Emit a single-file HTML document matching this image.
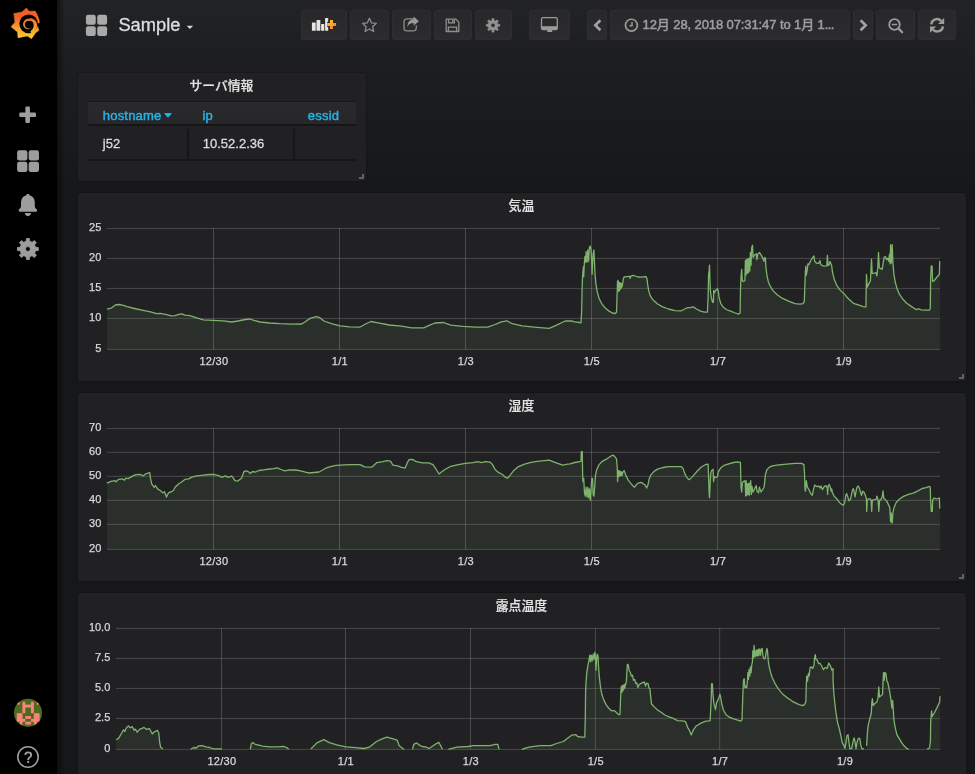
<!DOCTYPE html>
<html lang="ja">
<head>
<meta charset="utf-8">
<title>Grafana - Sample</title>
<style>
*{box-sizing:border-box;margin:0;padding:0}
html,body{width:975px;height:774px;overflow:hidden}
body{background:#161719;color:#d8d9da;font-family:"Liberation Sans","Noto Sans CJK JP",sans-serif;font-size:13px;position:relative}
.page{position:absolute;left:57px;top:0;width:918px;height:774px;background:linear-gradient(180deg,#212325 0,#1c1e20 60px,#161719 200px)}
.page:before{content:"";position:absolute;left:0;top:0;width:8px;height:100%;background:linear-gradient(90deg,rgba(0,0,0,.45),rgba(0,0,0,0))}
.side{position:absolute;left:0;top:0;width:57px;height:774px;background:#000}
.side svg{position:absolute}
.abs{position:absolute}
.btn{position:absolute;top:10px;height:30px;border-radius:2px;background:linear-gradient(180deg,#28282a,#2c2c2e);border:1px solid #2e2e30}
.btn svg{position:absolute}
.title{position:absolute;left:118.4px;top:11.6px;font-size:18.3px;line-height:26px;color:#dcddde;white-space:nowrap;-webkit-text-stroke:0.35px #dcddde}
.time{position:absolute;left:642.6px;top:16.3px;font-size:13px;line-height:18px;color:#9e9fa0;white-space:nowrap;-webkit-text-stroke:0.5px #9e9fa0;letter-spacing:-0.1px}
.panel{position:absolute;background:#212124;border-radius:2.5px;box-shadow:0 0 0 1px rgba(0,0,0,.15)}
.ptitle{position:absolute;left:-1.2px;right:0;text-align:center;font-size:12.8px;font-weight:500;color:#e3e3e3;line-height:18px;white-space:nowrap;-webkit-text-stroke:0.2px #e3e3e3}
.rz{position:absolute;right:2px;bottom:1.7px;width:5.100px;height:5px;border-right:2px solid #626265;border-bottom:2px solid #626265}
.th{position:absolute;color:#25b4e6;font-size:13px;line-height:16px;white-space:nowrap;-webkit-text-stroke:0.45px #25b4e6;letter-spacing:0.2px}
.td{position:absolute;color:#dadbdc;font-size:13px;line-height:16px;white-space:nowrap;-webkit-text-stroke:0.3px #dadbdc}
svg text{font-family:"Liberation Sans","Noto Sans CJK JP",sans-serif}
.ax{font-size:11px;fill:#d8d9da;stroke:#d8d9da;stroke-width:0.25px}
.axx{letter-spacing:0.3px}
body>*{will-change:opacity}
</style>
</head>
<body>
<div class="side"><svg class="abs" style="left:0;top:0" width="57" height="774" viewBox="0 0 57 774">
<defs><linearGradient id="lg" x1="0" y1="0" x2="0" y2="1"><stop offset="0" stop-color="#f05a28"/><stop offset="0.3" stop-color="#f2642b"/><stop offset="0.62" stop-color="#f79a2e"/><stop offset="1" stop-color="#fcd02c"/></linearGradient><clipPath id="av"><circle cx="28" cy="712.9" r="14.1"/></clipPath></defs>
<g id="logo"><polygon points="26.37,8.02 29.16,11.28 35.21,11.05 36.74,13.84 38.14,16.63 39.07,19.65 39.40,22.67 38.23,23.60 37.77,26.86 38.93,30.35 35.44,32.91 31.49,38.72 27.53,35.93 18.00,37.79 17.53,31.98 11.02,26.86 14.98,22.21 13.81,13.60 21.95,11.98" fill="url(#lg)" stroke="url(#lg2)" stroke-width="0.5" stroke-linejoin="round"/>
<circle cx="28.65" cy="23.84" r="9.35" fill="#000"/>
<path d="M35.91 23.37 L40.56 23.23 L40.56 25.47 L35.91 25.93 Z" fill="#000"/>
<polygon points="31.29,33.96 32.08,33.59 32.83,33.15 33.52,32.66 34.17,32.11 34.75,31.52 35.28,30.88 35.65,30.31 35.99,29.73 36.27,29.13 36.50,28.51 36.69,27.89 36.83,27.26 36.94,26.77 37.03,26.28 37.08,25.78 37.11,25.29 37.10,24.79 37.07,24.30 36.81,23.23 36.41,22.24 35.90,21.32 35.28,20.50 34.57,19.80 33.80,19.20 32.93,18.79 32.05,18.50 31.16,18.35 30.30,18.33 29.47,18.42 28.70,18.63 27.96,18.68 27.23,18.82 26.53,19.06 25.86,19.39 25.24,19.80 24.69,20.29 24.21,20.86 23.81,21.48 23.50,22.15 23.28,22.85 23.15,23.57 23.12,24.30 23.21,25.02 23.40,25.72 23.67,26.38 24.03,27.00 24.45,27.56 24.95,28.05 25.52,28.45 26.12,28.76 26.76,28.99 27.41,29.12 28.06,29.18 28.70,29.14 29.05,29.07 29.38,28.98 29.71,28.87 30.02,28.73 30.32,28.57 30.60,28.39 30.55,28.26 30.24,28.36 29.93,28.43 29.62,28.48 29.31,28.51 29.00,28.51 28.70,28.49 28.15,28.44 27.62,28.32 27.11,28.13 26.64,27.87 26.20,27.56 25.80,27.20 25.48,26.78 25.21,26.32 25.00,25.83 24.86,25.33 24.79,24.82 24.79,24.30 24.85,23.80 24.98,23.31 25.17,22.84 25.42,22.41 25.72,22.02 26.07,21.67 26.48,21.41 26.91,21.21 27.36,21.08 27.81,21.01 28.26,21.00 28.70,21.05 29.14,20.91 29.63,20.83 30.14,20.82 30.67,20.89 31.20,21.04 31.72,21.28 32.17,21.64 32.56,22.07 32.91,22.56 33.19,23.10 33.40,23.68 33.53,24.30 33.59,24.59 33.63,24.88 33.64,25.17 33.65,25.48 33.63,25.78 33.59,26.08 33.54,26.48 33.46,26.87 33.35,27.26 33.20,27.65 33.02,28.04 32.81,28.41 32.56,28.90 32.25,29.38 31.90,29.84 31.48,30.27 31.02,30.68 30.50,31.04" fill="url(#lg2)"/>
<linearGradient id="lg2" gradientUnits="userSpaceOnUse" x1="0" y1="8" x2="0" y2="39"><stop offset="0" stop-color="#f05a28"/><stop offset="0.3" stop-color="#f2642b"/><stop offset="0.62" stop-color="#f79a2e"/><stop offset="1" stop-color="#fcd02c"/></linearGradient></g>
<rect x="19.3" y="112.5" width="16.7" height="4.6" rx="1.2" fill="#9d9d9d"/><rect x="25.35" y="106.5" width="4.6" height="16.4" rx="1.2" fill="#9d9d9d"/>
<rect x="17.10" y="150.20" width="10.30" height="10.25" rx="2.20" fill="#9d9d9d"/><rect x="17.10" y="161.75" width="10.30" height="10.25" rx="2.20" fill="#9d9d9d"/><rect x="28.70" y="150.20" width="10.30" height="10.25" rx="2.20" fill="#9d9d9d"/><rect x="28.70" y="161.75" width="10.30" height="10.25" rx="2.20" fill="#9d9d9d"/>
<path d="M27.9 194.1c1 0 1.5 .5 1.6 1.2c3.4 .9 5.3 3.4 5.3 7.3v3.6c0 1.2 .6 2 1.7 2.800c.5 .4 .6 .8 .6 1.300c0 .9 -.6 1.5 -1.6 1.500h-15.200c-1 0 -1.6 -.6 -1.6 -1.500c0 -.5 .1 -.9 .6 -1.300c1.1 -.8 1.7 -1.6 1.7 -2.800v-3.600c0 -3.9 1.9 -6.4 5.3 -7.300c.1 -.7 .6 -1.2 1.6 -1.200z" fill="#9d9d9d"/>
<path d="M24.9 213.1h6c0 1.8 -1.3 3.1 -3 3.100s-3 -1.3 -3 -3.100z" fill="#9d9d9d"/>
<path d="M26.12 241.30 L26.41 238.51 L29.39 238.51 L29.68 241.30 L32.08 242.30 L34.26 240.52 L36.38 242.64 L34.60 244.82 L35.60 247.22 L38.39 247.51 L38.39 250.49 L35.60 250.78 L34.60 253.18 L36.38 255.36 L34.26 257.48 L32.08 255.70 L29.68 256.70 L29.39 259.49 L26.41 259.49 L26.12 256.70 L23.72 255.70 L21.54 257.48 L19.42 255.36 L21.20 253.18 L20.20 250.78 L17.41 250.49 L17.41 247.51 L20.20 247.22 L21.20 244.82 L19.42 242.64 L21.54 240.52 L23.72 242.30Z M25.50 249.00 a2.40 2.40 0 1 0 4.80 0 a2.40 2.40 0 1 0 -4.80 0Z" fill="#9d9d9d" fill-rule="evenodd" stroke="#9d9d9d" stroke-width="0.8" stroke-linejoin="round"/>
<circle cx="28" cy="712.9" r="14.1" fill="#4b6c1b"/><g clip-path="url(#av)" fill="#ff8080">
<rect x="16.79" y="701.82" width="2.84" height="2.84"/>
<rect x="22.47" y="701.82" width="2.84" height="3.34"/>
<rect x="31.00" y="701.82" width="2.84" height="3.34"/>
<rect x="36.68" y="701.82" width="2.84" height="2.84"/>
<rect x="22.47" y="704.66" width="3.34" height="3.34"/>
<rect x="25.31" y="704.66" width="3.34" height="2.84"/>
<rect x="28.16" y="704.66" width="3.34" height="2.84"/>
<rect x="31.00" y="704.66" width="2.84" height="3.34"/>
<rect x="22.47" y="707.50" width="2.84" height="3.34"/>
<rect x="31.00" y="707.50" width="2.84" height="3.34"/>
<rect x="22.47" y="710.35" width="2.84" height="2.84"/>
<rect x="31.00" y="710.35" width="2.84" height="2.84"/>
<rect x="16.79" y="713.19" width="3.34" height="3.34"/>
<rect x="19.63" y="713.19" width="2.84" height="3.34"/>
<rect x="33.84" y="713.19" width="3.34" height="3.34"/>
<rect x="36.68" y="713.19" width="2.84" height="3.34"/>
<rect x="16.79" y="716.03" width="3.34" height="3.34"/>
<rect x="19.63" y="716.03" width="2.84" height="3.34"/>
<rect x="25.31" y="716.03" width="3.34" height="2.84"/>
<rect x="28.16" y="716.03" width="2.84" height="2.84"/>
<rect x="33.84" y="716.03" width="3.34" height="3.34"/>
<rect x="36.68" y="716.03" width="2.84" height="3.34"/>
<rect x="16.79" y="718.87" width="3.34" height="2.84"/>
<rect x="19.63" y="718.87" width="3.34" height="3.34"/>
<rect x="22.47" y="718.87" width="2.84" height="2.84"/>
<rect x="31.00" y="718.87" width="3.34" height="2.84"/>
<rect x="33.84" y="718.87" width="3.34" height="3.34"/>
<rect x="36.68" y="718.87" width="2.84" height="2.84"/>
<rect x="19.63" y="721.72" width="2.84" height="2.84"/>
<rect x="25.31" y="721.72" width="3.34" height="2.84"/>
<rect x="28.16" y="721.72" width="2.84" height="2.84"/>
<rect x="33.84" y="721.72" width="2.84" height="2.84"/>
</g>
<circle cx="28" cy="757" r="10.2" fill="none" stroke="#9d9d9d" stroke-width="1.6"/>
<path d="M25.3 755c.1 -1.7 1.2 -2.6 2.9 -2.600c1.8 0 3 1 3 2.500c0 1.2 -.7 1.9 -1.7 2.600c-.9 .6 -1.3 1.2 -1.3 2.100v.5" fill="none" stroke="#9d9d9d" stroke-width="1.9" stroke-linecap="butt"/><circle cx="28.2" cy="762" r="1.150" fill="#9d9d9d"/>
</svg></div>
<div class="page"></div>
<svg class="abs" style="left:84px;top:12px" width="26" height="26" viewBox="84 12 26 26"><rect x="85.90" y="14.80" width="9.85" height="9.85" rx="2.20" fill="#a9a9a9"/><rect x="85.90" y="26.15" width="9.85" height="9.85" rx="2.20" fill="#a9a9a9"/><rect x="97.25" y="14.80" width="9.85" height="9.85" rx="2.20" fill="#a9a9a9"/><rect x="97.25" y="26.15" width="9.85" height="9.85" rx="2.20" fill="#a9a9a9"/></svg>
<div class="title">Sample</div>
<svg class="abs" style="left:185px;top:24px" width="10" height="7" viewBox="185 24 10 7"><path d="M186.7 25.700h6.400l-3.2 3.400z" fill="#d8d9da"/></svg>
<div class="btn" style="left:301px;width:46px"></div>
<div class="btn" style="left:350px;width:39px"></div>
<div class="btn" style="left:392px;width:39px"></div>
<div class="btn" style="left:434px;width:38px"></div>
<div class="btn" style="left:475px;width:37px"></div>
<div class="btn" style="left:529px;width:41px"></div>
<div class="btn" style="left:587px;width:20px"></div>
<div class="btn" style="left:610px;width:240px"></div>
<div class="btn" style="left:853px;width:20px"></div>
<div class="btn" style="left:876px;width:39px"></div>
<div class="btn" style="left:918px;width:38px"></div>
<svg class="abs" style="left:295px;top:0" width="680" height="52" viewBox="295 0 680 52">
<defs><linearGradient id="og" x1="0" y1="0" x2="1" y2="1"><stop offset="0" stop-color="#ffd33a"/><stop offset="1" stop-color="#f2702a"/></linearGradient></defs>
<rect x="311.90" y="22.60" width="3.80" height="8.20" rx="0.5" fill="#e6e6e6"/>
<rect x="316.50" y="20.00" width="3.80" height="10.80" rx="0.5" fill="#e6e6e6"/>
<rect x="321.10" y="24.10" width="3.20" height="6.70" rx="0.5" fill="#e6e6e6"/>
<rect x="325.10" y="17.90" width="3.10" height="12.90" rx="0.5" fill="#e6e6e6"/>
<path d="M327.2 24.4H336.100M331.5 20V28.9" stroke="#262628" stroke-width="5.2" fill="none"/>
<path d="M327.2 24.4H336.100M331.5 20V28.9" stroke="url(#og)" stroke-width="3" fill="none"/>
<path d="M369.40 18.30 L371.40 22.85 L376.34 23.34 L372.63 26.65 L373.69 31.51 L369.40 29.00 L365.11 31.51 L366.17 26.65 L362.46 23.34 L367.40 22.85Z" fill="none" stroke="#8e8e8e" stroke-width="1.3" stroke-linejoin="round"/>
<path d="M413.5 18.900h-6.300c-1.9 0 -3.2 1.3 -3.2 3.200v5.600c0 1.9 1.3 3.2 3.2 3.200h5.900c1.9 0 3.2 -1.3 3.2 -3.200v-1.8" fill="none" stroke="#8e8e8e" stroke-width="1.3" stroke-linecap="round"/>
<path d="M413.6 16.600l5.3 4.600l-5.3 4.600v-2.700c-3.4 0 -5.2 1.2 -6 4.200c-.3 -4.7 1.7 -7.6 6 -8z" fill="#9a9a9a"/>
<path d="M446.2 19.100h9.600l3 3v9.400h-12.600z" fill="none" stroke="#8e8e8e" stroke-width="1.3" stroke-linejoin="round"/><path d="M448.6 19.300v3.600h5.800v-3.600M452.7 20v2.200M448.4 31.400v-4.300h8.200v4.3" fill="none" stroke="#8e8e8e" stroke-width="1.3"/>
<path d="M491.87 20.43 L492.03 18.47 L493.97 18.47 L494.13 20.43 L495.65 21.06 L497.14 19.78 L498.52 21.16 L497.24 22.65 L497.87 24.17 L499.83 24.33 L499.83 26.27 L497.87 26.43 L497.24 27.95 L498.52 29.44 L497.14 30.82 L495.65 29.54 L494.13 30.17 L493.97 32.13 L492.03 32.13 L491.87 30.17 L490.35 29.54 L488.86 30.82 L487.48 29.44 L488.76 27.95 L488.13 26.43 L486.17 26.27 L486.17 24.33 L488.13 24.17 L488.76 22.65 L487.48 21.16 L488.86 19.78 L490.35 21.06Z M490.90 25.30 a2.10 2.10 0 1 0 4.20 0 a2.10 2.10 0 1 0 -4.20 0Z" fill="#929292" fill-rule="evenodd" stroke="#929292" stroke-width="0.5" stroke-linejoin="round"/>
<rect x="541.5" y="17.7" width="15.8" height="11.8" rx="1.4" fill="none" stroke="#9a9a9a" stroke-width="1.3"/><rect x="541.5" y="26.2" width="15.8" height="3.3" fill="#9a9a9a"/><path d="M547.6 30h4.300l.5 1.900h-5.300z" fill="#9a9a9a"/>
<path d="M600.4 20.300L595.3 25.300L600.4 30.3" fill="none" stroke="#a3a3a3" stroke-width="2.6" stroke-linejoin="miter"/>
<path d="M860.6 20.300L865.7 25.300L860.6 30.3" fill="none" stroke="#a3a3a3" stroke-width="2.6" stroke-linejoin="miter"/>
<circle cx="631.4" cy="25.2" r="5.950" fill="none" stroke="#9a9a9a" stroke-width="1.7"/><path d="M632 21.900v3.900h-2.5" fill="none" stroke="#9a9a9a" stroke-width="1.5"/>
<circle cx="894.5" cy="24.5" r="5.3" fill="none" stroke="#9a9a9a" stroke-width="1.8"/><path d="M898.5 28.600L902.2 32.3" stroke="#9a9a9a" stroke-width="2.2" stroke-linecap="round"/><path d="M891.8 24.500h5.5" stroke="#9a9a9a" stroke-width="1.5"/>
<path d="M931.3 24.300a5.7 5.7 0 0 1 9.9 -3.3" fill="none" stroke="#9c9c9c" stroke-width="2.4"/><path d="M944.2 17.800v6.200h-6.200z" fill="#9c9c9c"/><path d="M942.9 26.300a5.7 5.7 0 0 1 -9.9 3.3" fill="none" stroke="#9c9c9c" stroke-width="2.4"/><path d="M930 32.800v-6.200h6.200z" fill="#9c9c9c"/>
</svg>
<div class="time">12月 28, 2018 07:31:47 to 1月 1<span style="letter-spacing:-0.6px">...</span></div>
<div class="panel" style="left:78px;top:73px;width:288px;height:107.800px">
  <div class="ptitle" style="top:4px">サーバ情報</div>
  <div class="abs" style="left:10px;top:27.600px;width:268px;height:25px;background:#161617"></div>
  <div class="abs" style="left:10px;top:29.100px;width:268px;height:21.800px;background:linear-gradient(180deg,#2a2a2c,#272729)"></div>
  <div class="th" style="left:24.800px;top:34.600px">hostname</div>
  <svg class="abs" style="left:85px;top:39px" width="10" height="8" viewBox="0 0 10 8"><path d="M1.7 1.600h6.600l-3.3 3.700z" fill="#25b4e6" stroke="#25b4e6" stroke-width="0.9" stroke-linejoin="round"/></svg>
  <div class="th" style="left:124.400px;top:34.600px">ip</div>
  <div class="th" style="left:229.800px;top:34.600px">essid</div>
  <div class="abs" style="left:10px;top:85.900px;width:268px;height:1.700px;background:#161617"></div>
  <div class="abs" style="left:109.200px;top:55.600px;width:1.700px;height:30.500px;background:#161617"></div>
  <div class="abs" style="left:215.200px;top:55.600px;width:1.700px;height:30.500px;background:#161617"></div>
  <div class="td" style="left:24.800px;top:62.700px">j52</div>
  <div class="td" style="left:124.800px;top:62.700px">10.52.2.36</div>
  <div class="rz"></div>
</div>
<div class="panel" style="left:78px;top:193px;width:888px;height:187.8px"><div class="ptitle" style="top:4px">気温</div><div class="rz"></div></div>
<div class="panel" style="left:78px;top:393px;width:888px;height:187.8px"><div class="ptitle" style="top:4px">湿度</div><div class="rz"></div></div>
<div class="panel" style="left:78px;top:593px;width:888px;height:190px"><div class="ptitle" style="top:4px">露点温度</div></div>
<svg class="abs" style="left:0;top:0" width="975" height="774" viewBox="0 0 975 774">
<rect x="107" y="227.9" width="833" height="1" fill="rgba(255,255,255,0.185)"/>
<text class="ax" x="101.3" y="231.4" text-anchor="end">25</text>
<rect x="107" y="257.9" width="833" height="1" fill="rgba(255,255,255,0.185)"/>
<text class="ax" x="101.3" y="261.4" text-anchor="end">20</text>
<rect x="107" y="287.9" width="833" height="1" fill="rgba(255,255,255,0.185)"/>
<text class="ax" x="101.3" y="291.4" text-anchor="end">15</text>
<rect x="107" y="317.9" width="833" height="1" fill="rgba(255,255,255,0.185)"/>
<text class="ax" x="101.3" y="321.4" text-anchor="end">10</text>
<rect x="107" y="348.9" width="833" height="1" fill="rgba(255,255,255,0.185)"/>
<text class="ax" x="101.3" y="352" text-anchor="end">5</text>
<rect x="213" y="228" width="1" height="121.4" fill="rgba(255,255,255,0.185)"/>
<text class="ax axx" x="213.9" y="365" text-anchor="middle">12/30</text>
<rect x="339" y="228" width="1" height="121.4" fill="rgba(255,255,255,0.185)"/>
<text class="ax axx" x="339.9" y="365" text-anchor="middle">1/1</text>
<rect x="465" y="228" width="1" height="121.4" fill="rgba(255,255,255,0.185)"/>
<text class="ax axx" x="465.9" y="365" text-anchor="middle">1/3</text>
<rect x="591" y="228" width="1" height="121.4" fill="rgba(255,255,255,0.185)"/>
<text class="ax axx" x="591.9" y="365" text-anchor="middle">1/5</text>
<rect x="717.1" y="228" width="1" height="121.4" fill="rgba(255,255,255,0.185)"/>
<text class="ax axx" x="718" y="365" text-anchor="middle">1/7</text>
<rect x="843" y="228" width="1" height="121.4" fill="rgba(255,255,255,0.185)"/>
<text class="ax axx" x="843.9" y="365" text-anchor="middle">1/9</text>
<polygon points="106.9,349.4 106.9,309.2 111.1,308.2 115.3,305.0 119.2,304.5 123.4,305.3 127.1,306.7 134.5,308.5 143.1,310.4 150.5,311.9 156.6,313.6 160.3,313.4 166.5,314.6 171.4,315.8 175.1,315.6 178.8,314.4 182.0,313.9 184.9,315.1 189.8,315.6 196.0,317.6 203.4,319.8 213.2,320.3 223.1,320.8 231.7,322.0 237.8,321.0 245.2,319.5 250.2,319.0 253.8,320.3 260.0,322.0 269.8,323.0 279.7,323.7 292.0,324.2 301.8,324.0 305.5,321.5 310.5,318.1 316.6,316.6 319.1,317.3 324.0,321.0 331.4,323.7 340.0,325.9 349.8,326.9 359.7,327.2 364.6,324.5 370.8,321.5 376.9,322.7 389.2,325.0 401.5,326.2 411.4,327.9 423.7,327.9 428.6,325.7 434.8,323.0 443.4,322.5 450.8,325.2 463.1,326.4 475.4,327.2 487.7,327.2 495.1,324.5 501.2,321.8 506.9,320.8 512.3,323.7 522.2,325.9 536.9,327.4 549.2,328.4 556.6,325.2 565.2,321.0 571.4,320.8 574.8,321.9 579.7,322.5 581.0,322.9 581.6,312.2 582.1,289.6 582.6,275.0 583.4,267.0 583.7,276.7 584.2,265.4 584.9,256.5 585.7,262.1 586.1,251.6 587.0,262.1 587.8,250.0 588.6,261.3 589.4,247.6 590.2,246.0 591.0,249.2 591.5,257.3 592.1,274.3 592.6,262.1 593.1,254.1 593.9,250.0 594.4,260.5 595.0,273.4 595.8,283.1 597.1,291.2 599.1,298.5 601.5,303.3 604.7,307.4 608.8,310.9 612.3,313.0 615.2,313.5 616.5,312.2 617.0,297.7 617.5,281.5 618.0,280.4 618.3,282.0 618.7,291.5 619.0,282.3 619.4,290.5 619.7,282.7 620.1,289.5 620.5,283.0 620.8,288.5 621.2,283.3 621.5,287.5 621.9,283.7 622.2,286.5 622.6,284.0 623.3,279.1 624.1,277.0 626.5,276.7 629.8,276.4 630.1,278.3 631.0,275.9 633.8,275.5 637.8,277.0 641.9,277.2 645.9,276.5 646.9,278.3 647.7,284.8 648.8,291.2 650.4,296.1 653.2,300.1 657.2,303.8 662.1,306.6 668.5,309.0 675.0,310.6 681.4,310.8 684.7,309.0 687.9,307.7 690.0,307.6 693.2,306.9 696.5,309.0 700.5,311.1 704.5,312.2 707.4,312.2 708.1,297.7 708.6,273.4 709.1,271.8 709.5,265.1 709.9,278.3 710.3,289.6 711.3,297.7 712.6,302.2 713.4,302.5 713.7,290.4 714.5,292.8 715.5,290.4 717.5,288.8 718.3,291.2 719.1,297.7 720.7,303.3 723.1,307.0 726.3,309.5 731.2,311.4 735.2,313.0 738.4,314.1 740.1,313.0 740.5,289.6 741.0,276.7 741.7,269.4 742.3,280.7 743.3,281.5 744.9,280.7 745.4,260.5 745.9,275.1 746.5,259.7 747.2,273.4 747.8,258.9 748.5,272.6 749.1,258.1 749.8,271.0 750.4,252.5 751.0,265.4 751.7,247.6 752.5,245.2 753.0,257.3 754.6,254.9 756.2,253.7 756.9,259.7 757.8,254.1 759.4,252.5 761.1,254.9 762.7,258.1 764.0,261.3 764.8,257.3 765.4,258.1 765.9,267.0 766.9,275.1 768.3,281.5 770.3,286.4 773.2,290.9 777.2,294.8 782.1,298.2 788.5,301.2 795.0,303.7 799.8,304.1 803.0,303.7 804.3,301.7 805.3,273.4 805.8,266.2 806.3,275.1 807.3,269.4 807.9,263.8 809.0,264.6 810.7,260.5 812.3,258.1 813.9,256.0 814.7,261.3 816.3,263.0 818.7,263.4 820.0,260.5 820.7,264.6 823.6,266.2 826.8,265.9 827.4,255.4 828.1,265.4 829.2,264.6 830.0,261.3 831.6,265.4 832.5,271.8 834.1,279.1 836.5,284.8 839.7,289.6 844.6,294.4 848.6,299.0 853.4,303.3 858.3,304.9 863.1,306.6 865.9,306.9 866.2,289.6 866.5,274.3 867.2,287.2 868.8,283.9 870.4,280.7 870.9,271.8 871.5,259.2 872.2,273.4 874.4,273.1 876.1,272.6 876.9,275.9 877.7,268.6 878.5,252.5 879.3,267.8 880.9,268.6 882.2,269.4 883.0,263.8 884.1,257.3 885.4,256.5 886.6,259.7 887.7,258.1 888.7,261.3 889.5,254.1 890.1,263.8 890.6,244.7 891.4,263.0 892.2,244.7 893.0,263.8 893.8,273.4 895.1,281.5 897.1,288.8 899.5,294.4 902.7,299.0 906.7,303.3 911.6,306.6 916.4,309.8 918.0,308.7 921.3,309.8 926.1,310.1 929.4,310.1 930.3,308.2 930.6,278.3 931.3,265.7 932.1,266.2 932.6,281.5 934.2,280.7 936.6,277.5 939.4,274.3 939.7,261.3 940.0,261.3 940.0,349.4" fill="rgba(126,178,109,0.10)"/>
<polyline points="106.9,309.2 111.1,308.2 115.3,305.0 119.2,304.5 123.4,305.3 127.1,306.7 134.5,308.5 143.1,310.4 150.5,311.9 156.6,313.6 160.3,313.4 166.5,314.6 171.4,315.8 175.1,315.6 178.8,314.4 182.0,313.9 184.9,315.1 189.8,315.6 196.0,317.6 203.4,319.8 213.2,320.3 223.1,320.8 231.7,322.0 237.8,321.0 245.2,319.5 250.2,319.0 253.8,320.3 260.0,322.0 269.8,323.0 279.7,323.7 292.0,324.2 301.8,324.0 305.5,321.5 310.5,318.1 316.6,316.6 319.1,317.3 324.0,321.0 331.4,323.7 340.0,325.9 349.8,326.9 359.7,327.2 364.6,324.5 370.8,321.5 376.9,322.7 389.2,325.0 401.5,326.2 411.4,327.9 423.7,327.9 428.6,325.7 434.8,323.0 443.4,322.5 450.8,325.2 463.1,326.4 475.4,327.2 487.7,327.2 495.1,324.5 501.2,321.8 506.9,320.8 512.3,323.7 522.2,325.9 536.9,327.4 549.2,328.4 556.6,325.2 565.2,321.0 571.4,320.8 574.8,321.9 579.7,322.5 581.0,322.9 581.6,312.2 582.1,289.6 582.6,275.0 583.4,267.0 583.7,276.7 584.2,265.4 584.9,256.5 585.7,262.1 586.1,251.6 587.0,262.1 587.8,250.0 588.6,261.3 589.4,247.6 590.2,246.0 591.0,249.2 591.5,257.3 592.1,274.3 592.6,262.1 593.1,254.1 593.9,250.0 594.4,260.5 595.0,273.4 595.8,283.1 597.1,291.2 599.1,298.5 601.5,303.3 604.7,307.4 608.8,310.9 612.3,313.0 615.2,313.5 616.5,312.2 617.0,297.7 617.5,281.5 618.0,280.4 618.3,282.0 618.7,291.5 619.0,282.3 619.4,290.5 619.7,282.7 620.1,289.5 620.5,283.0 620.8,288.5 621.2,283.3 621.5,287.5 621.9,283.7 622.2,286.5 622.6,284.0 623.3,279.1 624.1,277.0 626.5,276.7 629.8,276.4 630.1,278.3 631.0,275.9 633.8,275.5 637.8,277.0 641.9,277.2 645.9,276.5 646.9,278.3 647.7,284.8 648.8,291.2 650.4,296.1 653.2,300.1 657.2,303.8 662.1,306.6 668.5,309.0 675.0,310.6 681.4,310.8 684.7,309.0 687.9,307.7 690.0,307.6 693.2,306.9 696.5,309.0 700.5,311.1 704.5,312.2 707.4,312.2 708.1,297.7 708.6,273.4 709.1,271.8 709.5,265.1 709.9,278.3 710.3,289.6 711.3,297.7 712.6,302.2 713.4,302.5 713.7,290.4 714.5,292.8 715.5,290.4 717.5,288.8 718.3,291.2 719.1,297.7 720.7,303.3 723.1,307.0 726.3,309.5 731.2,311.4 735.2,313.0 738.4,314.1 740.1,313.0 740.5,289.6 741.0,276.7 741.7,269.4 742.3,280.7 743.3,281.5 744.9,280.7 745.4,260.5 745.9,275.1 746.5,259.7 747.2,273.4 747.8,258.9 748.5,272.6 749.1,258.1 749.8,271.0 750.4,252.5 751.0,265.4 751.7,247.6 752.5,245.2 753.0,257.3 754.6,254.9 756.2,253.7 756.9,259.7 757.8,254.1 759.4,252.5 761.1,254.9 762.7,258.1 764.0,261.3 764.8,257.3 765.4,258.1 765.9,267.0 766.9,275.1 768.3,281.5 770.3,286.4 773.2,290.9 777.2,294.8 782.1,298.2 788.5,301.2 795.0,303.7 799.8,304.1 803.0,303.7 804.3,301.7 805.3,273.4 805.8,266.2 806.3,275.1 807.3,269.4 807.9,263.8 809.0,264.6 810.7,260.5 812.3,258.1 813.9,256.0 814.7,261.3 816.3,263.0 818.7,263.4 820.0,260.5 820.7,264.6 823.6,266.2 826.8,265.9 827.4,255.4 828.1,265.4 829.2,264.6 830.0,261.3 831.6,265.4 832.5,271.8 834.1,279.1 836.5,284.8 839.7,289.6 844.6,294.4 848.6,299.0 853.4,303.3 858.3,304.9 863.1,306.6 865.9,306.9 866.2,289.6 866.5,274.3 867.2,287.2 868.8,283.9 870.4,280.7 870.9,271.8 871.5,259.2 872.2,273.4 874.4,273.1 876.1,272.6 876.9,275.9 877.7,268.6 878.5,252.5 879.3,267.8 880.9,268.6 882.2,269.4 883.0,263.8 884.1,257.3 885.4,256.5 886.6,259.7 887.7,258.1 888.7,261.3 889.5,254.1 890.1,263.8 890.6,244.7 891.4,263.0 892.2,244.7 893.0,263.8 893.8,273.4 895.1,281.5 897.1,288.8 899.5,294.4 902.7,299.0 906.7,303.3 911.6,306.6 916.4,309.8 918.0,308.7 921.3,309.8 926.1,310.1 929.4,310.1 930.3,308.2 930.6,278.3 931.3,265.7 932.1,266.2 932.6,281.5 934.2,280.7 936.6,277.5 939.4,274.3 939.7,261.3 940.0,261.3" fill="none" stroke="#7eb26d" stroke-width="1.3" stroke-linejoin="round"/>
<rect x="107" y="427.9" width="833" height="1" fill="rgba(255,255,255,0.185)"/>
<text class="ax" x="101.3" y="431.4" text-anchor="end">70</text>
<rect x="107" y="451.8" width="833" height="1" fill="rgba(255,255,255,0.185)"/>
<text class="ax" x="101.3" y="455.3" text-anchor="end">60</text>
<rect x="107" y="475.8" width="833" height="1" fill="rgba(255,255,255,0.185)"/>
<text class="ax" x="101.3" y="479.3" text-anchor="end">50</text>
<rect x="107" y="499.9" width="833" height="1" fill="rgba(255,255,255,0.185)"/>
<text class="ax" x="101.3" y="503.4" text-anchor="end">40</text>
<rect x="107" y="523.9" width="833" height="1" fill="rgba(255,255,255,0.185)"/>
<text class="ax" x="101.3" y="527.4" text-anchor="end">30</text>
<rect x="107" y="548.9" width="833" height="1" fill="rgba(255,255,255,0.185)"/>
<text class="ax" x="101.3" y="552" text-anchor="end">20</text>
<rect x="213" y="428" width="1" height="121.4" fill="rgba(255,255,255,0.185)"/>
<text class="ax axx" x="213.9" y="565" text-anchor="middle">12/30</text>
<rect x="339" y="428" width="1" height="121.4" fill="rgba(255,255,255,0.185)"/>
<text class="ax axx" x="339.9" y="565" text-anchor="middle">1/1</text>
<rect x="465" y="428" width="1" height="121.4" fill="rgba(255,255,255,0.185)"/>
<text class="ax axx" x="465.9" y="565" text-anchor="middle">1/3</text>
<rect x="591" y="428" width="1" height="121.4" fill="rgba(255,255,255,0.185)"/>
<text class="ax axx" x="591.9" y="565" text-anchor="middle">1/5</text>
<rect x="717.1" y="428" width="1" height="121.4" fill="rgba(255,255,255,0.185)"/>
<text class="ax axx" x="718" y="565" text-anchor="middle">1/7</text>
<rect x="843" y="428" width="1" height="121.4" fill="rgba(255,255,255,0.185)"/>
<text class="ax axx" x="843.9" y="565" text-anchor="middle">1/9</text>
<polygon points="106.9,549.4 106.9,483.1 111.1,481.4 114.8,480.6 116.0,481.8 118.5,479.4 122.2,478.9 124.6,480.1 125.8,478.2 128.3,478.6 132.0,476.4 135.7,474.7 140.6,474.5 143.1,475.9 145.5,474.0 148.0,473.2 149.7,472.5 150.7,479.4 151.7,483.8 154.2,487.3 155.4,485.5 157.8,489.2 160.3,490.5 162.8,492.9 164.5,491.7 166.5,497.1 168.4,492.9 171.4,491.7 173.4,490.5 175.1,487.3 178.8,483.8 181.2,482.3 184.9,479.4 188.6,478.9 192.3,476.9 197.2,475.9 203.4,475.2 209.5,474.5 214.5,474.5 219.4,475.9 221.8,477.4 225.5,475.9 228.0,477.4 231.7,476.2 233.4,478.2 234.9,480.6 237.8,481.1 241.5,478.2 244.0,471.5 246.5,470.8 248.9,472.0 250.2,473.5 252.6,471.5 255.1,472.2 258.8,470.5 263.7,469.8 269.8,469.0 273.5,468.6 277.2,467.8 280.9,469.5 284.6,470.8 289.5,469.8 295.7,470.0 300.6,470.8 305.5,472.2 309.2,473.0 314.2,472.5 319.1,472.0 322.8,470.0 326.5,467.8 331.4,466.3 336.3,465.4 340.0,465.1 349.8,464.6 360.2,464.6 364.6,466.8 372.0,467.1 376.9,462.6 383.1,461.7 386.8,460.7 390.5,461.2 392.9,465.1 397.8,465.8 401.5,467.3 405.2,468.1 407.0,463.4 408.9,459.7 412.6,459.4 416.3,461.7 422.5,462.9 428.6,462.9 433.0,464.6 436.0,469.0 439.0,474.0 441.4,472.0 445.8,469.0 450.8,466.3 458.2,464.6 465.5,463.4 472.9,462.6 477.8,461.7 481.5,462.6 485.2,461.7 490.2,462.2 492.6,464.6 495.1,469.5 498.8,472.7 502.5,474.5 504.9,476.9 507.4,478.2 509.8,475.7 513.5,470.8 518.5,466.6 524.6,464.1 532.0,462.2 539.4,461.2 549.2,460.2 554.2,462.2 559.1,463.9 562.8,465.1 567.7,464.1 570.0,463.8 574.8,462.5 581.0,461.3 581.3,451.6 582.3,451.6 582.6,473.4 582.9,481.5 583.7,478.3 584.5,492.8 585.3,496.1 586.1,487.2 587.0,496.9 587.8,487.2 588.6,497.7 589.4,488.8 590.2,500.1 591.0,489.6 591.8,478.3 592.6,478.3 593.1,494.4 593.9,496.1 594.7,486.4 595.5,475.1 596.6,470.2 599.1,464.6 602.3,461.3 606.3,459.2 609.6,457.0 612.3,455.2 614.4,456.2 616.5,458.9 617.2,467.0 617.6,481.5 618.2,470.5 618.6,476.4 618.9,470.8 619.3,476.1 619.7,471.2 620.0,475.9 620.4,471.5 620.8,475.6 621.1,471.8 621.5,475.4 621.9,472.2 622.2,475.1 622.6,472.5 623.3,471.8 624.1,470.5 625.7,475.1 628.1,479.9 630.6,483.1 633.0,486.0 634.6,487.2 636.2,484.8 638.6,482.8 641.1,482.3 643.5,483.9 645.1,485.1 646.7,488.0 648.0,484.8 649.1,479.1 650.8,475.1 654.0,471.4 658.0,468.9 662.9,467.5 668.5,466.7 675.0,466.7 681.4,466.7 683.1,468.6 684.7,473.4 686.3,476.7 688.7,479.6 690.0,479.1 693.2,475.9 697.3,471.0 701.3,467.0 705.3,464.7 708.1,464.2 708.6,478.3 709.1,492.8 709.5,497.7 710.0,486.4 710.7,473.4 711.8,470.2 713.1,469.4 713.6,481.5 714.2,476.7 715.8,477.5 717.5,476.7 718.3,471.8 720.7,467.8 723.9,465.4 728.8,463.8 733.6,462.5 737.6,461.8 740.4,462.5 740.7,473.4 741.0,486.4 741.7,492.0 742.3,483.1 743.3,481.5 744.6,480.7 745.2,482.3 745.7,496.1 746.2,480.7 746.8,495.3 747.5,483.9 748.1,494.4 748.8,483.1 749.4,495.3 750.1,483.9 750.7,480.7 751.4,494.4 752.0,486.4 753.0,492.0 754.6,488.8 756.2,485.6 757.0,491.2 758.6,492.8 759.4,487.2 761.1,492.0 762.7,489.6 764.0,487.2 764.6,483.1 765.3,475.1 766.7,470.2 769.1,467.3 772.4,465.9 778.8,464.9 786.9,464.2 795.0,463.4 801.4,463.4 803.9,464.6 804.5,473.4 805.0,489.6 805.5,491.2 806.3,480.7 807.4,487.2 809.0,489.6 810.7,493.6 812.3,495.3 813.4,489.6 814.7,485.1 817.1,486.7 818.7,486.0 820.3,488.0 821.1,486.0 822.4,489.6 824.4,486.4 826.0,485.6 827.3,488.0 827.6,494.4 828.1,486.4 829.2,484.4 830.5,488.0 831.2,491.2 831.6,488.8 832.5,492.8 834.1,496.1 836.5,498.5 838.9,501.7 841.3,504.1 843.4,505.3 844.7,502.5 845.7,495.3 846.7,493.6 847.8,496.9 848.9,500.9 850.5,499.3 851.5,494.4 852.6,489.6 853.5,488.8 854.3,492.8 855.1,496.9 855.9,492.0 857.0,487.2 858.3,486.0 859.6,488.8 860.7,492.8 861.5,495.3 862.7,491.2 863.9,492.0 865.6,496.1 866.4,498.5 866.7,511.4 867.2,500.9 868.3,498.8 870.4,498.8 871.2,500.9 871.7,511.4 872.3,500.1 874.4,499.6 876.1,499.3 876.9,496.1 878.0,499.3 878.8,511.4 879.6,500.1 880.9,499.6 882.2,496.9 883.0,490.9 883.8,498.5 884.9,499.3 886.6,500.9 888.2,504.1 889.8,507.4 890.6,521.9 891.2,513.0 892.2,523.2 893.0,512.2 894.1,507.4 896.2,502.5 899.5,499.0 903.5,496.4 908.4,494.4 913.2,493.2 918.0,490.9 922.1,488.5 926.1,487.7 929.4,486.4 930.3,487.2 930.6,500.9 931.3,511.4 932.3,511.4 932.6,500.1 934.2,498.0 936.6,499.0 939.4,498.0 939.7,508.2 940.0,508.2 940.0,549.4" fill="rgba(126,178,109,0.10)"/>
<polyline points="106.9,483.1 111.1,481.4 114.8,480.6 116.0,481.8 118.5,479.4 122.2,478.9 124.6,480.1 125.8,478.2 128.3,478.6 132.0,476.4 135.7,474.7 140.6,474.5 143.1,475.9 145.5,474.0 148.0,473.2 149.7,472.5 150.7,479.4 151.7,483.8 154.2,487.3 155.4,485.5 157.8,489.2 160.3,490.5 162.8,492.9 164.5,491.7 166.5,497.1 168.4,492.9 171.4,491.7 173.4,490.5 175.1,487.3 178.8,483.8 181.2,482.3 184.9,479.4 188.6,478.9 192.3,476.9 197.2,475.9 203.4,475.2 209.5,474.5 214.5,474.5 219.4,475.9 221.8,477.4 225.5,475.9 228.0,477.4 231.7,476.2 233.4,478.2 234.9,480.6 237.8,481.1 241.5,478.2 244.0,471.5 246.5,470.8 248.9,472.0 250.2,473.5 252.6,471.5 255.1,472.2 258.8,470.5 263.7,469.8 269.8,469.0 273.5,468.6 277.2,467.8 280.9,469.5 284.6,470.8 289.5,469.8 295.7,470.0 300.6,470.8 305.5,472.2 309.2,473.0 314.2,472.5 319.1,472.0 322.8,470.0 326.5,467.8 331.4,466.3 336.3,465.4 340.0,465.1 349.8,464.6 360.2,464.6 364.6,466.8 372.0,467.1 376.9,462.6 383.1,461.7 386.8,460.7 390.5,461.2 392.9,465.1 397.8,465.8 401.5,467.3 405.2,468.1 407.0,463.4 408.9,459.7 412.6,459.4 416.3,461.7 422.5,462.9 428.6,462.9 433.0,464.6 436.0,469.0 439.0,474.0 441.4,472.0 445.8,469.0 450.8,466.3 458.2,464.6 465.5,463.4 472.9,462.6 477.8,461.7 481.5,462.6 485.2,461.7 490.2,462.2 492.6,464.6 495.1,469.5 498.8,472.7 502.5,474.5 504.9,476.9 507.4,478.2 509.8,475.7 513.5,470.8 518.5,466.6 524.6,464.1 532.0,462.2 539.4,461.2 549.2,460.2 554.2,462.2 559.1,463.9 562.8,465.1 567.7,464.1 570.0,463.8 574.8,462.5 581.0,461.3 581.3,451.6 582.3,451.6 582.6,473.4 582.9,481.5 583.7,478.3 584.5,492.8 585.3,496.1 586.1,487.2 587.0,496.9 587.8,487.2 588.6,497.7 589.4,488.8 590.2,500.1 591.0,489.6 591.8,478.3 592.6,478.3 593.1,494.4 593.9,496.1 594.7,486.4 595.5,475.1 596.6,470.2 599.1,464.6 602.3,461.3 606.3,459.2 609.6,457.0 612.3,455.2 614.4,456.2 616.5,458.9 617.2,467.0 617.6,481.5 618.2,470.5 618.6,476.4 618.9,470.8 619.3,476.1 619.7,471.2 620.0,475.9 620.4,471.5 620.8,475.6 621.1,471.8 621.5,475.4 621.9,472.2 622.2,475.1 622.6,472.5 623.3,471.8 624.1,470.5 625.7,475.1 628.1,479.9 630.6,483.1 633.0,486.0 634.6,487.2 636.2,484.8 638.6,482.8 641.1,482.3 643.5,483.9 645.1,485.1 646.7,488.0 648.0,484.8 649.1,479.1 650.8,475.1 654.0,471.4 658.0,468.9 662.9,467.5 668.5,466.7 675.0,466.7 681.4,466.7 683.1,468.6 684.7,473.4 686.3,476.7 688.7,479.6 690.0,479.1 693.2,475.9 697.3,471.0 701.3,467.0 705.3,464.7 708.1,464.2 708.6,478.3 709.1,492.8 709.5,497.7 710.0,486.4 710.7,473.4 711.8,470.2 713.1,469.4 713.6,481.5 714.2,476.7 715.8,477.5 717.5,476.7 718.3,471.8 720.7,467.8 723.9,465.4 728.8,463.8 733.6,462.5 737.6,461.8 740.4,462.5 740.7,473.4 741.0,486.4 741.7,492.0 742.3,483.1 743.3,481.5 744.6,480.7 745.2,482.3 745.7,496.1 746.2,480.7 746.8,495.3 747.5,483.9 748.1,494.4 748.8,483.1 749.4,495.3 750.1,483.9 750.7,480.7 751.4,494.4 752.0,486.4 753.0,492.0 754.6,488.8 756.2,485.6 757.0,491.2 758.6,492.8 759.4,487.2 761.1,492.0 762.7,489.6 764.0,487.2 764.6,483.1 765.3,475.1 766.7,470.2 769.1,467.3 772.4,465.9 778.8,464.9 786.9,464.2 795.0,463.4 801.4,463.4 803.9,464.6 804.5,473.4 805.0,489.6 805.5,491.2 806.3,480.7 807.4,487.2 809.0,489.6 810.7,493.6 812.3,495.3 813.4,489.6 814.7,485.1 817.1,486.7 818.7,486.0 820.3,488.0 821.1,486.0 822.4,489.6 824.4,486.4 826.0,485.6 827.3,488.0 827.6,494.4 828.1,486.4 829.2,484.4 830.5,488.0 831.2,491.2 831.6,488.8 832.5,492.8 834.1,496.1 836.5,498.5 838.9,501.7 841.3,504.1 843.4,505.3 844.7,502.5 845.7,495.3 846.7,493.6 847.8,496.9 848.9,500.9 850.5,499.3 851.5,494.4 852.6,489.6 853.5,488.8 854.3,492.8 855.1,496.9 855.9,492.0 857.0,487.2 858.3,486.0 859.6,488.8 860.7,492.8 861.5,495.3 862.7,491.2 863.9,492.0 865.6,496.1 866.4,498.5 866.7,511.4 867.2,500.9 868.3,498.8 870.4,498.8 871.2,500.9 871.7,511.4 872.3,500.1 874.4,499.6 876.1,499.3 876.9,496.1 878.0,499.3 878.8,511.4 879.6,500.1 880.9,499.6 882.2,496.9 883.0,490.9 883.8,498.5 884.9,499.3 886.6,500.9 888.2,504.1 889.8,507.4 890.6,521.9 891.2,513.0 892.2,523.2 893.0,512.2 894.1,507.4 896.2,502.5 899.5,499.0 903.5,496.4 908.4,494.4 913.2,493.2 918.0,490.9 922.1,488.5 926.1,487.7 929.4,486.4 930.3,487.2 930.6,500.9 931.3,511.4 932.3,511.4 932.6,500.1 934.2,498.0 936.6,499.0 939.4,498.0 939.7,508.2 940.0,508.2" fill="none" stroke="#7eb26d" stroke-width="1.3" stroke-linejoin="round"/>
<rect x="116" y="627.9" width="824" height="1" fill="rgba(255,255,255,0.185)"/>
<text class="ax" x="110.3" y="631.4" text-anchor="end">10.0</text>
<rect x="116" y="657.9" width="824" height="1" fill="rgba(255,255,255,0.185)"/>
<text class="ax" x="110.3" y="661.4" text-anchor="end">7.5</text>
<rect x="116" y="687.9" width="824" height="1" fill="rgba(255,255,255,0.185)"/>
<text class="ax" x="110.3" y="691.4" text-anchor="end">5.0</text>
<rect x="116" y="717.9" width="824" height="1" fill="rgba(255,255,255,0.185)"/>
<text class="ax" x="110.3" y="721.4" text-anchor="end">2.5</text>
<rect x="116" y="748.9" width="824" height="1" fill="rgba(255,255,255,0.185)"/>
<text class="ax" x="110.3" y="752" text-anchor="end">0</text>
<rect x="221" y="628" width="1" height="121.4" fill="rgba(255,255,255,0.185)"/>
<text class="ax axx" x="221.9" y="765" text-anchor="middle">12/30</text>
<rect x="345" y="628" width="1" height="121.4" fill="rgba(255,255,255,0.185)"/>
<text class="ax axx" x="345.9" y="765" text-anchor="middle">1/1</text>
<rect x="470" y="628" width="1" height="121.4" fill="rgba(255,255,255,0.185)"/>
<text class="ax axx" x="470.9" y="765" text-anchor="middle">1/3</text>
<rect x="594.9" y="628" width="1" height="121.4" fill="rgba(255,255,255,0.185)"/>
<text class="ax axx" x="595.8" y="765" text-anchor="middle">1/5</text>
<rect x="719.2" y="628" width="1" height="121.4" fill="rgba(255,255,255,0.185)"/>
<text class="ax axx" x="720.1" y="765" text-anchor="middle">1/7</text>
<rect x="844.1" y="628" width="1" height="121.4" fill="rgba(255,255,255,0.185)"/>
<text class="ax axx" x="845" y="765" text-anchor="middle">1/9</text>
<polygon points="116.2,749.4 116.2,739.7 118.6,738.4 121.1,734.0 123.5,729.8 124.8,731.5 126.5,727.4 128.5,725.9 130.2,727.8 132.2,726.6 134.1,730.3 135.4,729.1 137.1,732.3 139.5,729.3 142.0,728.3 144.0,727.4 146.4,729.3 149.4,728.6 150.6,730.8 152.3,734.0 154.3,731.8 157.3,730.3 158.7,732.8 159.7,742.6 160.7,747.5 162.9,748.8 162.9,749.4" fill="rgba(126,178,109,0.10)"/>
<polyline points="116.2,739.7 118.6,738.4 121.1,734.0 123.5,729.8 124.8,731.5 126.5,727.4 128.5,725.9 130.2,727.8 132.2,726.6 134.1,730.3 135.4,729.1 137.1,732.3 139.5,729.3 142.0,728.3 144.0,727.4 146.4,729.3 149.4,728.6 150.6,730.8 152.3,734.0 154.3,731.8 157.3,730.3 158.7,732.8 159.7,742.6 160.7,747.5 162.9,748.8" fill="none" stroke="#7eb26d" stroke-width="1.3" stroke-linejoin="round"/>
<polygon points="190.7,749.4 190.7,749.3 193.7,747.5 196.2,748.0 198.6,745.8 202.3,745.6 206.0,746.8 209.7,747.5 213.4,748.8 218.3,748.8 222.0,748.8 222.0,749.4" fill="rgba(126,178,109,0.10)"/>
<polyline points="190.7,749.3 193.7,747.5 196.2,748.0 198.6,745.8 202.3,745.6 206.0,746.8 209.7,747.5 213.4,748.8 218.3,748.8 222.0,748.8" fill="none" stroke="#7eb26d" stroke-width="1.3" stroke-linejoin="round"/>
<polygon points="250.3,749.4 250.3,749.3 251.3,743.8 252.8,742.6 255.2,744.3 258.9,745.1 262.6,746.1 270.0,746.8 277.4,746.8 283.5,746.3 286.7,747.5 288.7,749.3 288.7,749.4" fill="rgba(126,178,109,0.10)"/>
<polyline points="250.3,749.3 251.3,743.8 252.8,742.6 255.2,744.3 258.9,745.1 262.6,746.1 270.0,746.8 277.4,746.8 283.5,746.3 286.7,747.5 288.7,749.3" fill="none" stroke="#7eb26d" stroke-width="1.3" stroke-linejoin="round"/>
<polygon points="310.8,749.4 310.8,749.0 316.9,742.9 323.8,739.6 329.4,742.6 337.7,745.1 346.0,746.8 355.7,747.6 364.0,748.5 369.5,747.1 376.5,741.5 382.0,738.8 387.0,737.1 393.1,738.8 397.2,740.2 399.2,745.7 402.8,748.5 404.2,749.3 404.2,749.4" fill="rgba(126,178,109,0.10)"/>
<polyline points="310.8,749.0 316.9,742.9 323.8,739.6 329.4,742.6 337.7,745.1 346.0,746.8 355.7,747.6 364.0,748.5 369.5,747.1 376.5,741.5 382.0,738.8 387.0,737.1 393.1,738.8 397.2,740.2 399.2,745.7 402.8,748.5 404.2,749.3" fill="none" stroke="#7eb26d" stroke-width="1.3" stroke-linejoin="round"/>
<polygon points="412.5,749.4 412.5,749.3 413.8,744.3 416.6,742.9 419.4,745.1 422.2,746.5 426.3,747.1 429.1,748.5 433.2,745.7 436.0,743.8 438.8,742.4 440.7,745.7 442.4,749.3 442.4,749.4" fill="rgba(126,178,109,0.10)"/>
<polyline points="412.5,749.3 413.8,744.3 416.6,742.9 419.4,745.1 422.2,746.5 426.3,747.1 429.1,748.5 433.2,745.7 436.0,743.8 438.8,742.4 440.7,745.7 442.4,749.3" fill="none" stroke="#7eb26d" stroke-width="1.3" stroke-linejoin="round"/>
<polygon points="448.5,749.4 448.5,749.3 456.8,747.1 467.9,746.5 473.4,745.7 490.0,745.7 495.5,744.3 497.8,744.3 499.1,749.3 499.1,749.4" fill="rgba(126,178,109,0.10)"/>
<polyline points="448.5,749.3 456.8,747.1 467.9,746.5 473.4,745.7 490.0,745.7 495.5,744.3 497.8,744.3 499.1,749.3" fill="none" stroke="#7eb26d" stroke-width="1.3" stroke-linejoin="round"/>
<polygon points="521.9,749.4 521.9,749.3 528.8,747.1 539.9,745.7 550.9,745.7 556.5,743.5 563.4,741.5 567.5,738.2 571.7,735.2 575.9,734.6 577.6,736.5 581.8,737.2 584.8,737.2 585.3,718.1 585.6,691.2 586.1,681.1 586.8,672.7 587.6,667.7 588.5,662.6 589.3,658.4 589.8,655.1 590.5,661.8 591.3,655.1 592.2,660.9 593.2,654.2 594.0,659.3 594.9,652.2 595.5,657.6 596.0,670.2 596.5,660.9 597.2,654.2 598.0,655.9 598.6,667.7 599.4,677.7 600.6,687.8 601.9,694.5 603.6,699.6 606.1,704.6 608.6,708.0 611.1,710.5 614.5,710.8 617.0,713.0 618.7,714.7 620.0,714.4 620.4,702.9 620.9,691.2 621.3,686.5 621.6,692.5 622.0,686.1 622.3,691.5 622.6,685.7 623.0,690.5 623.3,685.2 623.6,689.5 624.0,684.8 624.3,688.5 624.6,684.4 625.0,687.5 625.3,684.0 625.8,684.1 626.4,681.1 626.9,671.0 627.4,664.3 628.3,665.1 629.1,670.2 630.5,672.7 631.3,676.1 632.5,675.2 633.5,680.3 634.7,679.4 635.8,683.6 636.8,682.8 638.0,687.5 639.2,684.5 640.5,683.6 642.2,682.8 644.2,681.9 645.6,686.1 646.4,683.1 648.1,683.6 648.9,687.8 649.9,688.7 650.6,696.2 651.5,703.8 654.0,706.6 657.3,709.7 661.5,712.5 664.9,715.0 669.1,716.9 673.3,718.4 677.5,720.6 682.5,720.9 685.6,721.7 687.6,727.3 689.6,730.7 691.3,734.9 693.4,729.8 696.0,726.1 697.5,725.3 700.9,723.1 705.1,721.4 710.1,720.6 710.6,711.3 711.1,701.3 711.6,683.6 712.3,683.6 713.0,694.5 713.8,702.9 714.7,706.3 715.5,709.7 716.5,702.9 717.7,700.4 718.8,697.9 719.9,694.2 720.9,698.7 721.9,704.6 723.6,710.5 726.1,714.7 729.4,717.2 733.6,718.9 737.8,720.1 740.7,721.1 742.0,719.7 742.5,704.6 743.0,691.2 743.5,680.3 744.2,678.6 744.9,687.8 745.7,686.1 746.7,687.8 747.4,681.1 747.9,672.7 748.4,679.4 749.1,669.3 749.8,676.1 750.4,666.8 751.1,672.7 751.8,664.3 752.4,662.6 752.8,650.9 753.4,657.6 754.1,645.5 754.8,656.8 755.5,650.9 756.1,655.9 756.8,650.0 757.5,655.9 758.2,649.2 758.8,655.6 759.7,648.9 760.5,655.1 761.3,649.2 762.2,648.4 762.9,655.9 763.9,658.9 765.2,658.4 766.0,653.4 766.9,648.4 767.6,651.7 768.2,660.1 769.2,666.8 770.6,672.7 772.3,677.7 774.8,683.1 778.1,688.7 782.3,693.7 787.4,697.9 792.4,701.3 797.5,703.8 801.7,705.5 804.2,705.0 805.8,702.1 806.2,687.8 806.7,676.1 807.5,681.1 808.4,673.5 809.2,676.1 810.0,667.7 811.2,666.8 812.6,668.5 813.9,665.7 814.6,657.6 815.3,654.6 815.9,659.3 817.3,660.1 818.5,663.5 820.1,663.5 821.7,666.0 823.4,669.7 825.4,667.3 827.1,668.5 828.8,663.0 830.5,666.0 831.8,670.2 833.0,668.5 833.1,681.1 833.8,692.9 834.8,702.9 836.0,713.0 837.7,723.1 839.4,729.0 841.0,736.5 842.4,743.2 843.6,744.9 844.9,748.3 846.1,741.6 846.9,735.7 848.1,734.8 848.9,741.6 849.8,748.6 851.6,748.6 852.8,742.4 854.1,737.9 855.0,741.6 856.0,748.6 857.0,742.4 858.3,738.5 859.8,738.5 860.7,744.9 862.0,748.6 864.0,749.1 864.0,749.4" fill="rgba(126,178,109,0.10)"/>
<polyline points="521.9,749.3 528.8,747.1 539.9,745.7 550.9,745.7 556.5,743.5 563.4,741.5 567.5,738.2 571.7,735.2 575.9,734.6 577.6,736.5 581.8,737.2 584.8,737.2 585.3,718.1 585.6,691.2 586.1,681.1 586.8,672.7 587.6,667.7 588.5,662.6 589.3,658.4 589.8,655.1 590.5,661.8 591.3,655.1 592.2,660.9 593.2,654.2 594.0,659.3 594.9,652.2 595.5,657.6 596.0,670.2 596.5,660.9 597.2,654.2 598.0,655.9 598.6,667.7 599.4,677.7 600.6,687.8 601.9,694.5 603.6,699.6 606.1,704.6 608.6,708.0 611.1,710.5 614.5,710.8 617.0,713.0 618.7,714.7 620.0,714.4 620.4,702.9 620.9,691.2 621.3,686.5 621.6,692.5 622.0,686.1 622.3,691.5 622.6,685.7 623.0,690.5 623.3,685.2 623.6,689.5 624.0,684.8 624.3,688.5 624.6,684.4 625.0,687.5 625.3,684.0 625.8,684.1 626.4,681.1 626.9,671.0 627.4,664.3 628.3,665.1 629.1,670.2 630.5,672.7 631.3,676.1 632.5,675.2 633.5,680.3 634.7,679.4 635.8,683.6 636.8,682.8 638.0,687.5 639.2,684.5 640.5,683.6 642.2,682.8 644.2,681.9 645.6,686.1 646.4,683.1 648.1,683.6 648.9,687.8 649.9,688.7 650.6,696.2 651.5,703.8 654.0,706.6 657.3,709.7 661.5,712.5 664.9,715.0 669.1,716.9 673.3,718.4 677.5,720.6 682.5,720.9 685.6,721.7 687.6,727.3 689.6,730.7 691.3,734.9 693.4,729.8 696.0,726.1 697.5,725.3 700.9,723.1 705.1,721.4 710.1,720.6 710.6,711.3 711.1,701.3 711.6,683.6 712.3,683.6 713.0,694.5 713.8,702.9 714.7,706.3 715.5,709.7 716.5,702.9 717.7,700.4 718.8,697.9 719.9,694.2 720.9,698.7 721.9,704.6 723.6,710.5 726.1,714.7 729.4,717.2 733.6,718.9 737.8,720.1 740.7,721.1 742.0,719.7 742.5,704.6 743.0,691.2 743.5,680.3 744.2,678.6 744.9,687.8 745.7,686.1 746.7,687.8 747.4,681.1 747.9,672.7 748.4,679.4 749.1,669.3 749.8,676.1 750.4,666.8 751.1,672.7 751.8,664.3 752.4,662.6 752.8,650.9 753.4,657.6 754.1,645.5 754.8,656.8 755.5,650.9 756.1,655.9 756.8,650.0 757.5,655.9 758.2,649.2 758.8,655.6 759.7,648.9 760.5,655.1 761.3,649.2 762.2,648.4 762.9,655.9 763.9,658.9 765.2,658.4 766.0,653.4 766.9,648.4 767.6,651.7 768.2,660.1 769.2,666.8 770.6,672.7 772.3,677.7 774.8,683.1 778.1,688.7 782.3,693.7 787.4,697.9 792.4,701.3 797.5,703.8 801.7,705.5 804.2,705.0 805.8,702.1 806.2,687.8 806.7,676.1 807.5,681.1 808.4,673.5 809.2,676.1 810.0,667.7 811.2,666.8 812.6,668.5 813.9,665.7 814.6,657.6 815.3,654.6 815.9,659.3 817.3,660.1 818.5,663.5 820.1,663.5 821.7,666.0 823.4,669.7 825.4,667.3 827.1,668.5 828.8,663.0 830.5,666.0 831.8,670.2 833.0,668.5 833.1,681.1 833.8,692.9 834.8,702.9 836.0,713.0 837.7,723.1 839.4,729.0 841.0,736.5 842.4,743.2 843.6,744.9 844.9,748.3 846.1,741.6 846.9,735.7 848.1,734.8 848.9,741.6 849.8,748.6 851.6,748.6 852.8,742.4 854.1,737.9 855.0,741.6 856.0,748.6 857.0,742.4 858.3,738.5 859.8,738.5 860.7,744.9 862.0,748.6 864.0,749.1" fill="none" stroke="#7eb26d" stroke-width="1.3" stroke-linejoin="round"/>
<polygon points="866.6,749.4 866.6,745.8 867.4,733.2 868.1,725.6 869.6,719.7 871.3,713.0 871.8,702.9 872.4,698.7 873.1,705.5 874.6,703.8 876.8,702.1 878.0,697.9 878.8,687.0 879.5,697.1 881.3,695.4 882.5,694.5 883.0,682.8 883.5,672.7 884.2,680.3 884.9,672.4 885.9,673.5 886.9,681.1 887.9,682.8 888.9,687.8 889.9,692.9 890.9,699.6 891.9,708.0 892.6,700.4 893.3,709.7 893.9,719.7 895.3,728.1 897.0,734.8 899.0,738.2 901.5,742.4 904.0,745.8 906.5,748.3 908.7,749.1 908.7,749.4" fill="rgba(126,178,109,0.10)"/>
<polyline points="866.6,745.8 867.4,733.2 868.1,725.6 869.6,719.7 871.3,713.0 871.8,702.9 872.4,698.7 873.1,705.5 874.6,703.8 876.8,702.1 878.0,697.9 878.8,687.0 879.5,697.1 881.3,695.4 882.5,694.5 883.0,682.8 883.5,672.7 884.2,680.3 884.9,672.4 885.9,673.5 886.9,681.1 887.9,682.8 888.9,687.8 889.9,692.9 890.9,699.6 891.9,708.0 892.6,700.4 893.3,709.7 893.9,719.7 895.3,728.1 897.0,734.8 899.0,738.2 901.5,742.4 904.0,745.8 906.5,748.3 908.7,749.1" fill="none" stroke="#7eb26d" stroke-width="1.3" stroke-linejoin="round"/>
<polygon points="927.2,749.4 927.2,749.1 929.5,748.0 930.4,741.6 930.7,721.4 931.6,711.0 932.2,716.4 934.3,713.0 936.8,708.0 939.6,702.1 940.0,696.2 940.0,749.4" fill="rgba(126,178,109,0.10)"/>
<polyline points="927.2,749.1 929.5,748.0 930.4,741.6 930.7,721.4 931.6,711.0 932.2,716.4 934.3,713.0 936.8,708.0 939.6,702.1 940.0,696.2" fill="none" stroke="#7eb26d" stroke-width="1.3" stroke-linejoin="round"/>
</svg>
</body>
</html>
